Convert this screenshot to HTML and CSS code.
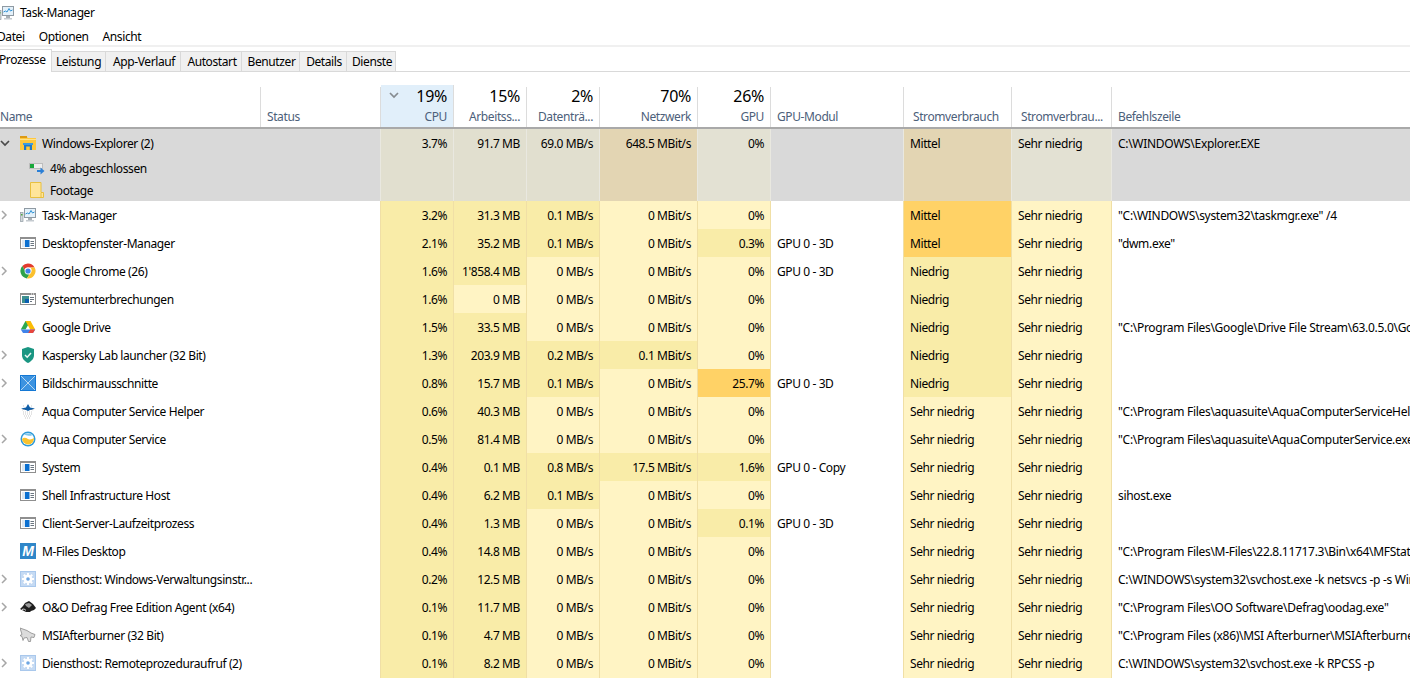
FILE: index.html
```html
<!DOCTYPE html>
<html lang="de">
<head>
<meta charset="utf-8">
<title>Task-Manager</title>
<link rel="stylesheet" href="styles.css">
</head>
<body>
<svg class="defs" aria-hidden="true">
  <symbol id="i-tm" viewBox="0 0 16 16">
    <rect x="4.500" y="1.500" width="11" height="9" fill="#e4f1fa" stroke="#8f9aa3"/>
    <path d="M5.500 7l2-1 1.500 1 2-3.500 1.500 2.500 2-1" fill="none" stroke="#2f93d6"/>
    <rect x="8" y="11" width="4" height="2" fill="#a8b0b6"/>
    <rect x="6" y="13" width="8" height="1.500" fill="#c4cacf"/>
    <rect x=".5" y="5.500" width="2.500" height="9" fill="#d2d7da" stroke="#8f9aa3" stroke-width=".7"/>
    <rect x="1" y="7" width="1.500" height="1.500" fill="#4fa83d"/>
  </symbol>
  <symbol id="i-folder" viewBox="0 0 16 16">
    <path d="M0 1h6l2 2h8v12H0z" fill="#ffc83d"/>
    <rect y="1" width="7" height="2" fill="#dd9a14"/>
    <rect y="4" width="16" height="1" fill="#ffe28a"/>
    <path d="M4 15V9h8v6H9.800v-3.500H6.200V15z" fill="#1f78c8"/>
    <rect x="3" y="8" width="10" height="2" fill="#3b9ae1"/>
  </symbol>
  <symbol id="i-progress" viewBox="0 0 16 16">
    <rect x="0" y="3" width="14" height="6" fill="#bdbdbd"/>
    <rect x="1" y="4" width="12" height="4" fill="#eeeeee"/>
    <rect x="1" y="4" width="4" height="4" fill="#19a83a"/>
    <path d="M8 10h3.500V7.500L15.500 11l-4 3.500V12H8z" fill="#2b7fd6"/>
  </symbol>
  <symbol id="i-footage" viewBox="0 0 16 16">
    <path d="M1.500 .5h10.500v10h2.500v5h-13z" fill="#ffe59a" stroke="#e8c040"/>
    <path d="M12 11v4.500" stroke="#e8c040"/>
  </symbol>
  <symbol id="i-sys" viewBox="0 0 16 16">
    <rect x="0" y="2" width="16" height="12" fill="#8f8f8f"/>
    <rect x="1" y="4" width="14" height="9" fill="#fff"/>
    <rect x="5" y="5" width="4.500" height="7" fill="#0a6fd0"/>
    <rect x="2" y="5" width="3" height="7" fill="#dbe7f2"/>
    <path d="M10.500 6.500h3.500M10.500 8.500h3.500M10.500 10.500h3.500" stroke="#6b7680"/>
  </symbol>
  <symbol id="i-int" viewBox="0 0 16 16">
    <rect x="0" y="2" width="16" height="12" fill="#8f8f8f"/>
    <rect x="11" y="2.500" width="1" height="1" fill="#fff"/>
    <rect x="13" y="2.500" width="1" height="1" fill="#fff"/>
    <rect x="1" y="4" width="14" height="9" fill="#fff"/>
    <rect x="2" y="5" width="7" height="7" fill="#3d8f8f"/>
    <rect x="5" y="8" width="4" height="4" fill="#0a5fb0"/>
    <path d="M10 6.500h4M10 8.500h4M10 10.500h2" stroke="#6b7680"/>
  </symbol>
  <symbol id="i-chrome" viewBox="0 0 16 16">
    <path d="M8 .5a7.500 7.500 0 0 1 6.600 3.900H8A3.600 3.600 0 0 0 4.600 6.700L2.300 3A7.500 7.500 0 0 1 8 .5z" fill="#e33b2e"/>
    <path d="M2.300 3l3.600 6.100A3.600 3.600 0 0 0 9.500 11.300L6.900 15.400A7.500 7.500 0 0 1 2.300 3z" fill="#2ea24a"/>
    <path d="M14.600 4.400A7.500 7.500 0 0 1 6.900 15.400l3.500-5.700a3.600 3.600 0 0 0 0-5.300z" fill="#fbc02d"/>
    <circle cx="8" cy="8" r="3.400" fill="#fff"/>
    <circle cx="8" cy="8" r="2.600" fill="#3f83ea"/>
  </symbol>
  <symbol id="i-drive" viewBox="0 0 16 16">
    <path d="M5.500 2h5l-5 8.500H.8z" fill="#2da94f"/>
    <path d="M5.500 2h5l4.700 8.500h-5z" fill="#fbbc05"/>
    <path d="M.8 10.500h14.400L13 14H3z" fill="#3f83ea"/>
    <path d="M10.200 10.500h5L13 14H8.200z" fill="#e8453c"/>
  </symbol>
  <symbol id="i-kasp" viewBox="0 0 16 16">
    <path d="M8 0l6 2v6c0 4-3 6.500-6 8-3-1.500-6-4-6-8V2z" fill="#1a9682"/>
    <path d="M5 8l2.200 2.200L11 6" fill="none" stroke="#e8f6f3" stroke-width="1.500"/>
  </symbol>
  <symbol id="i-snip" viewBox="0 0 16 16">
    <rect width="16" height="16" fill="#1478d4"/>
    <rect x="1" y="1" width="14" height="14" fill="#3c93e0"/>
    <path d="M1 1l14 14M15 1L1 15" stroke="#b6d7f2"/>
  </symbol>
  <symbol id="i-aquah" viewBox="0 0 16 16">
    <path d="M2 7l6-1 6 1" stroke="#d0d0d0" stroke-dasharray="1 1"/>
    <path d="M3 9h10M3 11h10M4 13h8M5 15h6M3 3h2M11 3h2" stroke="#c9c9c9" stroke-dasharray="1 1"/>
    <path d="M1 5.500l5-1L8 1l2 3.500 5 1-5 1.500-2 1-2-1z" fill="#0f5ea8"/>
  </symbol>
  <symbol id="i-aqua" viewBox="0 0 16 16">
    <circle cx="8" cy="8" r="7.500" fill="#2f9ad8"/>
    <circle cx="8" cy="8" r="6" fill="#fff"/>
    <path d="M2 8c2-2 4-1 6 0 2 1 4 .5 6-1a6 6 0 0 1-12 1z" fill="#f9c22e"/>
    <path d="M2.500 5c2-1.500 3-1 5-.5 2 .5 3 .5 5-.5L10 2.500 6 2.500z" fill="#7cc6ec"/>
  </symbol>
  <symbol id="i-gear" viewBox="0 0 16 16">
    <rect width="16" height="16" fill="#a9c8ec"/>
    <rect x="1" y="1" width="14" height="14" fill="#c5daf3"/>
    <path d="M8 2v12M2 8h12M3.800 3.800l8.400 8.400M12.200 3.800l-8.400 8.400" stroke="#fff" stroke-width="2"/>
    <circle cx="8" cy="8" r="4.300" fill="#fff"/>
    <circle cx="8" cy="8" r="1.800" fill="#6ea6e2"/>
  </symbol>
  <symbol id="i-defrag" viewBox="0 0 16 16">
    <path d="M0 10l3-3 2-3 4-2 4 3 3 4-2 2-3 1-1 1-4 0-2-1z" fill="#1f1f1f"/>
    <path d="M5 5l4-1 3 2-3 3-3-2z" fill="#9a9a9a"/>
    <path d="M2 10.500c2-1 3 0 4 1" stroke="#e8e8e8" fill="none"/>
  </symbol>
  <symbol id="i-jet" viewBox="0 0 16 16">
    <path d="M0 1l7 2.500 4 2.500 4 1.500-1 3-3-.5-.5 4.500-2 0-1.500-4-3 .5-1 2.500-1-4-2-1 2-1z" fill="#dcdcdc" stroke="#8a8a8a" stroke-width=".8"/>
  </symbol>
  <symbol id="i-chev-r" viewBox="0 0 8 10">
    <path d="M2 1l4 4-4 4" fill="none" stroke="#a6a6a6" stroke-width="1.500"/>
  </symbol>
  <symbol id="i-chev-d" viewBox="0 0 10 8">
    <path d="M1 2l4 4 4-4" fill="none" stroke="#4a4a4a" stroke-width="1.700"/>
  </symbol>
</svg>

<div class="window">
  <div class="titlebar">
    <svg class="app-icon"><use href="#i-tm"/></svg>
    <span>Task-Manager</span>
  </div>
  <div class="menu">
    <span>Datei</span><span>Optionen</span><span>Ansicht</span>
  </div>
  <div class="tabs">
    <span class="tab active t1">Prozesse</span>
    <span class="tab t2">Leistung</span>
    <span class="tab t3">App-Verlauf</span>
    <span class="tab t4">Autostart</span>
    <span class="tab t5">Benutzer</span>
    <span class="tab t6">Details</span>
    <span class="tab t7">Dienste</span>
  </div>

  <div class="grid head">
    <div class="hc left clip-name"><b></b><em>Name</em></div>
    <div class="hc left"><b></b><em>Status</em></div>
    <div class="hc sorted"><svg class="sort"><use href="#i-chev-d"/></svg><b>19%</b><em>CPU</em></div>
    <div class="hc"><b>15%</b><em>Arbeitss...</em></div>
    <div class="hc"><b>2%</b><em>Datenträ...</em></div>
    <div class="hc"><b>70%</b><em>Netzwerk</em></div>
    <div class="hc"><b>26%</b><em>GPU</em></div>
    <div class="hc left"><b></b><em>GPU-Modul</em></div>
    <div class="hc left wide"><b></b><em>Stromverbrauch</em></div>
    <div class="hc left wide"><b></b><em>Stromverbrau...</em></div>
    <div class="hc left last"><b></b><em>Befehlszeile</em></div>
  </div>

  <div class="grid group">
    <div class="c name">
      <div class="gline"><svg class="chev-d"><use href="#i-chev-d"/></svg><svg class="ico"><use href="#i-folder"/></svg><span>Windows-Explorer (2)</span></div>
      <div class="sub"><svg class="ico"><use href="#i-progress"/></svg><span>4% abgeschlossen</span></div>
      <div class="sub"><svg class="ico"><use href="#i-footage"/></svg><span>Footage</span></div>
    </div>
    <div class="c"></div>
    <div class="c r g1">3.7%</div>
    <div class="c r g1">91.7 MB</div>
    <div class="c r g1">69.0 MB/s</div>
    <div class="c r g3">648.5 MBit/s</div>
    <div class="c r g2">0%</div>
    <div class="c"></div>
    <div class="c g3">Mittel</div>
    <div class="c g2">Sehr niedrig</div>
    <div class="c last">C:\WINDOWS\Explorer.EXE</div>
  </div>

  <div class="grid row">
    <div class="c name"><svg class="chev"><use href="#i-chev-r"/></svg><svg class="ico"><use href="#i-tm"/></svg><span>Task-Manager</span></div><div class="c"></div>
    <div class="c r h1">3.2%</div><div class="c r h1">31.3 MB</div><div class="c r h1">0.1 MB/s</div><div class="c r h0">0 MBit/s</div><div class="c r h0">0%</div><div class="c"></div><div class="c h3">Mittel</div><div class="c h0">Sehr niedrig</div><div class="c last">"C:\WINDOWS\system32\taskmgr.exe" /4</div>
  </div>
  <div class="grid row">
    <div class="c name"><i class="chev"></i><svg class="ico"><use href="#i-sys"/></svg><span>Desktopfenster-Manager</span></div><div class="c"></div>
    <div class="c r h1">2.1%</div><div class="c r h1">35.2 MB</div><div class="c r h1">0.1 MB/s</div><div class="c r h0">0 MBit/s</div><div class="c r h1">0.3%</div><div class="c">GPU 0 - 3D</div><div class="c h3">Mittel</div><div class="c h0">Sehr niedrig</div><div class="c last">"dwm.exe"</div>
  </div>
  <div class="grid row">
    <div class="c name"><svg class="chev"><use href="#i-chev-r"/></svg><svg class="ico"><use href="#i-chrome"/></svg><span>Google Chrome (26)</span></div><div class="c"></div>
    <div class="c r h1">1.6%</div><div class="c r h1">1'858.4 MB</div><div class="c r h0">0 MB/s</div><div class="c r h0">0 MBit/s</div><div class="c r h0">0%</div><div class="c">GPU 0 - 3D</div><div class="c h1">Niedrig</div><div class="c h0">Sehr niedrig</div><div class="c last"></div>
  </div>
  <div class="grid row">
    <div class="c name"><i class="chev"></i><svg class="ico"><use href="#i-int"/></svg><span>Systemunterbrechungen</span></div><div class="c"></div>
    <div class="c r h1">1.6%</div><div class="c r h0">0 MB</div><div class="c r h0">0 MB/s</div><div class="c r h0">0 MBit/s</div><div class="c r h0">0%</div><div class="c"></div><div class="c h1">Niedrig</div><div class="c h0">Sehr niedrig</div><div class="c last"></div>
  </div>
  <div class="grid row">
    <div class="c name"><i class="chev"></i><svg class="ico"><use href="#i-drive"/></svg><span>Google Drive</span></div><div class="c"></div>
    <div class="c r h1">1.5%</div><div class="c r h1">33.5 MB</div><div class="c r h0">0 MB/s</div><div class="c r h0">0 MBit/s</div><div class="c r h0">0%</div><div class="c"></div><div class="c h1">Niedrig</div><div class="c h0">Sehr niedrig</div><div class="c last">"C:\Program Files\Google\Drive File Stream\63.0.5.0\GoogleDriveFS.exe"</div>
  </div>
  <div class="grid row">
    <div class="c name"><svg class="chev"><use href="#i-chev-r"/></svg><svg class="ico"><use href="#i-kasp"/></svg><span>Kaspersky Lab launcher (32 Bit)</span></div><div class="c"></div>
    <div class="c r h1">1.3%</div><div class="c r h1">203.9 MB</div><div class="c r h1">0.2 MB/s</div><div class="c r h1">0.1 MBit/s</div><div class="c r h0">0%</div><div class="c"></div><div class="c h1">Niedrig</div><div class="c h0">Sehr niedrig</div><div class="c last"></div>
  </div>
  <div class="grid row">
    <div class="c name"><svg class="chev"><use href="#i-chev-r"/></svg><svg class="ico"><use href="#i-snip"/></svg><span>Bildschirmausschnitte</span></div><div class="c"></div>
    <div class="c r h1">0.8%</div><div class="c r h1">15.7 MB</div><div class="c r h1">0.1 MB/s</div><div class="c r h0">0 MBit/s</div><div class="c r h3">25.7%</div><div class="c">GPU 0 - 3D</div><div class="c h1">Niedrig</div><div class="c h0">Sehr niedrig</div><div class="c last"></div>
  </div>
  <div class="grid row">
    <div class="c name"><i class="chev"></i><svg class="ico"><use href="#i-aquah"/></svg><span>Aqua Computer Service Helper</span></div><div class="c"></div>
    <div class="c r h1">0.6%</div><div class="c r h1">40.3 MB</div><div class="c r h0">0 MB/s</div><div class="c r h0">0 MBit/s</div><div class="c r h0">0%</div><div class="c"></div><div class="c h0">Sehr niedrig</div><div class="c h0">Sehr niedrig</div><div class="c last">"C:\Program Files\aquasuite\AquaComputerServiceHelper.exe"</div>
  </div>
  <div class="grid row">
    <div class="c name"><svg class="chev"><use href="#i-chev-r"/></svg><svg class="ico"><use href="#i-aqua"/></svg><span>Aqua Computer Service</span></div><div class="c"></div>
    <div class="c r h1">0.5%</div><div class="c r h1">81.4 MB</div><div class="c r h0">0 MB/s</div><div class="c r h0">0 MBit/s</div><div class="c r h0">0%</div><div class="c"></div><div class="c h0">Sehr niedrig</div><div class="c h0">Sehr niedrig</div><div class="c last">"C:\Program Files\aquasuite\AquaComputerService.exe"</div>
  </div>
  <div class="grid row">
    <div class="c name"><i class="chev"></i><svg class="ico"><use href="#i-sys"/></svg><span>System</span></div><div class="c"></div>
    <div class="c r h1">0.4%</div><div class="c r h1">0.1 MB</div><div class="c r h1">0.8 MB/s</div><div class="c r h1">17.5 MBit/s</div><div class="c r h1">1.6%</div><div class="c">GPU 0 - Copy</div><div class="c h0">Sehr niedrig</div><div class="c h0">Sehr niedrig</div><div class="c last"></div>
  </div>
  <div class="grid row">
    <div class="c name"><i class="chev"></i><svg class="ico"><use href="#i-sys"/></svg><span>Shell Infrastructure Host</span></div><div class="c"></div>
    <div class="c r h1">0.4%</div><div class="c r h1">6.2 MB</div><div class="c r h1">0.1 MB/s</div><div class="c r h0">0 MBit/s</div><div class="c r h0">0%</div><div class="c"></div><div class="c h0">Sehr niedrig</div><div class="c h0">Sehr niedrig</div><div class="c last">sihost.exe</div>
  </div>
  <div class="grid row">
    <div class="c name"><i class="chev"></i><svg class="ico"><use href="#i-sys"/></svg><span>Client-Server-Laufzeitprozess</span></div><div class="c"></div>
    <div class="c r h1">0.4%</div><div class="c r h1">1.3 MB</div><div class="c r h0">0 MB/s</div><div class="c r h0">0 MBit/s</div><div class="c r h1">0.1%</div><div class="c">GPU 0 - 3D</div><div class="c h0">Sehr niedrig</div><div class="c h0">Sehr niedrig</div><div class="c last"></div>
  </div>
  <div class="grid row">
    <div class="c name"><i class="chev"></i><i class="mfiles">M</i><span>M-Files Desktop</span></div><div class="c"></div>
    <div class="c r h1">0.4%</div><div class="c r h1">14.8 MB</div><div class="c r h0">0 MB/s</div><div class="c r h0">0 MBit/s</div><div class="c r h0">0%</div><div class="c"></div><div class="c h0">Sehr niedrig</div><div class="c h0">Sehr niedrig</div><div class="c last">"C:\Program Files\M-Files\22.8.11717.3\Bin\x64\MFStatus.exe"</div>
  </div>
  <div class="grid row">
    <div class="c name"><svg class="chev"><use href="#i-chev-r"/></svg><svg class="ico"><use href="#i-gear"/></svg><span>Diensthost: Windows-Verwaltungsinstr...</span></div><div class="c"></div>
    <div class="c r h1">0.2%</div><div class="c r h1">12.5 MB</div><div class="c r h0">0 MB/s</div><div class="c r h0">0 MBit/s</div><div class="c r h0">0%</div><div class="c"></div><div class="c h0">Sehr niedrig</div><div class="c h0">Sehr niedrig</div><div class="c last">C:\WINDOWS\system32\svchost.exe -k netsvcs -p -s Winmgmt</div>
  </div>
  <div class="grid row">
    <div class="c name"><svg class="chev"><use href="#i-chev-r"/></svg><svg class="ico"><use href="#i-defrag"/></svg><span>O&amp;O Defrag Free Edition Agent (x64)</span></div><div class="c"></div>
    <div class="c r h1">0.1%</div><div class="c r h1">11.7 MB</div><div class="c r h0">0 MB/s</div><div class="c r h0">0 MBit/s</div><div class="c r h0">0%</div><div class="c"></div><div class="c h0">Sehr niedrig</div><div class="c h0">Sehr niedrig</div><div class="c last">"C:\Program Files\OO Software\Defrag\oodag.exe"</div>
  </div>
  <div class="grid row">
    <div class="c name"><i class="chev"></i><svg class="ico"><use href="#i-jet"/></svg><span>MSIAfterburner (32 Bit)</span></div><div class="c"></div>
    <div class="c r h1">0.1%</div><div class="c r h1">4.7 MB</div><div class="c r h0">0 MB/s</div><div class="c r h0">0 MBit/s</div><div class="c r h0">0%</div><div class="c"></div><div class="c h0">Sehr niedrig</div><div class="c h0">Sehr niedrig</div><div class="c last">"C:\Program Files (x86)\MSI Afterburner\MSIAfterburner.exe"</div>
  </div>
  <div class="grid row">
    <div class="c name"><svg class="chev"><use href="#i-chev-r"/></svg><svg class="ico"><use href="#i-gear"/></svg><span>Diensthost: Remoteprozeduraufruf (2)</span></div><div class="c"></div>
    <div class="c r h1">0.1%</div><div class="c r h1">8.2 MB</div><div class="c r h0">0 MB/s</div><div class="c r h0">0 MBit/s</div><div class="c r h0">0%</div><div class="c"></div><div class="c h0">Sehr niedrig</div><div class="c h0">Sehr niedrig</div><div class="c last">C:\WINDOWS\system32\svchost.exe -k RPCSS -p</div>
  </div>
  <div class="grid row">
    <div class="c name"></div><div class="c"></div>
    <div class="c r h1"></div><div class="c r h1"></div><div class="c r h0"></div><div class="c r h0"></div><div class="c r h0"></div><div class="c"></div><div class="c h0"></div><div class="c h0"></div><div class="c last"></div>
  </div>
</div>
</body>
</html>
```
FILE: styles.css
```css
* { box-sizing: border-box; }
html, body { margin: 0; padding: 0; height: 100%; overflow: hidden; background: #fff; }
body { font: 12px/16px "Noto Sans", sans-serif; color: #000; letter-spacing: -0.4px; }
.defs { width: 0; height: 0; display: block; overflow: hidden; }
.window { height: 678px; overflow: hidden; }

.titlebar { height: 24px; padding-top: 1px; display: flex; align-items: center; gap: 6px; margin-left: -2px; }
.app-icon { width: 16px; height: 16px; flex: none; }

.menu { height: 22px; display: flex; gap: 14px; align-items: center; margin-left: -3px; padding-top: 5px; border-bottom: 1px solid #f0f0f0; }

.tabs { height: 26px; padding-top: 3px; display: flex; align-items: flex-end; border-bottom: 1px solid #d9d9d9; box-shadow: inset 0 1px 0 #f0f0f0; }
.tab { height: 20px; display: flex; align-items: center; justify-content: center; padding-left: 2px; background: #f0f0f0; border: 1px solid #d9d9d9; border-left: 0; border-bottom: 0; }
.tab.active { height: 23px; background: #fff; margin-bottom: -1px; align-items: flex-start; padding: 2px 0 0; justify-content: flex-start; text-indent: -1px; }
.t1 { width: 52px; } .t2 { width: 54px; padding-left: 0; } .t3 { width: 75px; } .t4 { width: 61px; } .t5 { width: 58px; } .t6 { width: 47px; } .t7 { width: 49px; }

.grid { display: grid; grid-template-columns: 261px 120px 73px 73px 73px 98px 73px 133px 108px 100px 298px; }

.head { margin-top: 13px; height: 44px; grid-template-rows: 42px; border-bottom: 2px solid #a9a9a9; }
.hc { border-right: 1px solid #dcdcdc; display: flex; flex-direction: column; align-items: flex-end; justify-content: flex-end; padding: 0 6px 2px; position: relative; margin-top: 2px; }
.hc b { font-weight: 400; font-size: 16px; line-height: 19px; letter-spacing: -0.3px; color: #000; min-height: 19px; margin-bottom: 3px; }
.hc em { font-style: normal; line-height: 16px; color: #4c607a; white-space: nowrap; }
.hc.left { align-items: flex-start; }
.hc.wide { padding-left: 9px; }
.hc.clip-name { padding-left: 0; }
.hc.last { border-right: 0; }
.hc.sorted { background: #e1effa; margin-top: 0; }
.sort { position: absolute; left: 8px; top: 6px; width: 10px; height: 8px; opacity: .6; }

.row { height: 28px; }
.c { border-right: 1px solid transparent; padding: 0 6px; line-height: 30px; white-space: nowrap; overflow: hidden; }
.c.last { border-right: 0; letter-spacing: -0.3px; }
.c.r { text-align: right; }
.h0 { background: #fff4c4; border-right-color: #f0dfa6; }
.h1 { background: #f9ecA8; border-right-color: #f0dfa6; }
.h3 { background: #ffd266; border-right-color: #f0dfa6; }
.row .c:nth-child(2) { border-right-color: #f0dfa6; }
.row .c:nth-child(8) { border-right-color: #f0dfa6; }

.group { height: 72px; background: #d9d9d9; }
.g1 { background: #e1dfcf; border-right-color: #e9e8e0; }
.g2 { background: #e3e1d3; border-right-color: #e9e8e0; }
.g3 { background: #e3d5b3; border-right-color: #e9e8e0; }
.group .c:nth-child(2) { border-right-color: #e9e8e0; }
.group .c:nth-child(8) { border-right-color: #e9e8e0; }

.c.name { padding: 0; display: flex; align-items: center; }
.group .c.name { display: block; }
.name span { padding-top: 2px; }
.gline { height: 28px; display: flex; align-items: center; }
.sub { height: 22px; display: flex; align-items: center; padding-left: 29px; line-height: 22px; }
.sub .ico { margin-right: 5px; }
.chev { width: 8px; height: 10px; margin-right: 12px; flex: none; display: block; }
.chev-d { width: 10px; height: 8px; margin-right: 10px; flex: none; }
.ico { width: 16px; height: 16px; margin-right: 6px; flex: none; }
.mfiles { width: 16px; height: 16px; margin-right: 6px; flex: none; background: #2f86c8; color: #fff; font: italic 700 14px/16px "Liberation Sans", sans-serif; text-align: center; letter-spacing: 0; }
```
